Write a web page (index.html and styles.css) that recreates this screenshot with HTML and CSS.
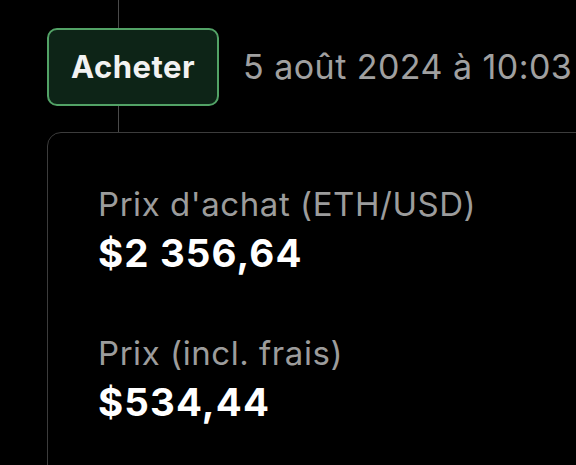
FILE: index.html
```html
<!DOCTYPE html>
<html lang="fr">
<head>
<meta charset="utf-8">
<link rel="stylesheet" href="styles.css">
</head>
<body>
<div class="timeline">
  <div class="head">
    <span class="badge">Acheter</span>
    <span class="date">5 août 2024 à 10:03</span>
  </div>
  <div class="card">
    <div class="item">
      <div class="label">Prix d'achat (ETH/USD)</div>
      <div class="value">$2&nbsp;356,64</div>
    </div>
    <div class="item">
      <div class="label">Prix (incl. frais)</div>
      <div class="value">$534,44</div>
    </div>
  </div>
</div>
</body>
</html>
```
FILE: styles.css
```css
html, body {
  margin: 0;
  padding: 0;
  background: #000;
  overflow: hidden;
  height: 465px;
}
body {
  font-family: Inter, "Liberation Sans", sans-serif;
  color: #fff;
}
.timeline {
  position: relative;
  padding: 28px 0 0 47px;
}
.timeline::before {
  content: "";
  position: absolute;
  left: 118px;
  top: 0;
  width: 1px;
  height: 132px;
  background: #4a4a4a;
}
.head {
  position: relative;
  display: flex;
  align-items: center;
  gap: 24px;
}
.badge {
  display: inline-block;
  box-sizing: border-box;
  height: 78px;
  line-height: 73px;
  padding: 0 22px;
  border: 2.5px solid #52a266;
  border-radius: 10px;
  background: #0d2417;
  color: #f2f2f2;
  font-weight: 700;
  font-size: 31px;
  letter-spacing: 0.5px;
}
.date {
  color: #a0a0a0;
  font-size: 34px;
  line-height: 40px;
  letter-spacing: 0.45px;
  white-space: nowrap;
}
.card {
  margin-top: 26px;
  width: 600px;
  height: 400px;
  border: 1px solid #3c3c3c;
  border-radius: 14px;
  padding: 51px 0 0 50px;
  display: flex;
  flex-direction: column;
  gap: 57px;
}
.label {
  color: #9c9c9c;
  font-size: 33px;
  line-height: 40px;
  letter-spacing: 0.55px;
  margin-bottom: 6px;
  white-space: nowrap;
}
.value {
  font-weight: 700;
  font-size: 38.5px;
  line-height: 46px;
  letter-spacing: 1.1px;
  white-space: nowrap;
}
```
